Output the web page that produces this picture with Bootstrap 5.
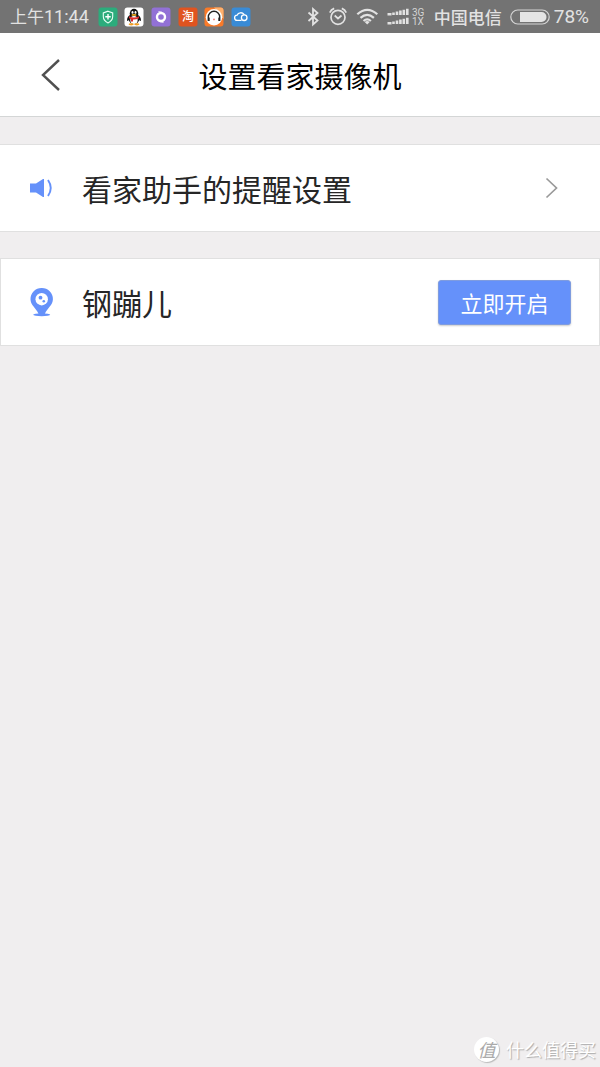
<!DOCTYPE html>
<html lang="zh-CN">
<head>
<meta charset="utf-8">
<meta name="viewport" content="width=device-width, initial-scale=1">
<title>设置看家摄像机</title>
<link href="https://cdn.jsdelivr.net/npm/bootstrap@5.3.0/dist/css/bootstrap.min.css" rel="stylesheet">
<style>
  body { background: #f0eeef; color: #262626; font-family: "Noto Sans CJK SC", sans-serif; }
  svg { display: block; flex: none; }
  .status-bar { height: 33px; background: #737373; color: #e2e2e2; font-family: Roboto, "Noto Sans CJK SC", sans-serif; font-size: 18px; line-height: 33px; padding: 0 11px 0 10px; }
  .status-cn { font-size: 17px; }
  .carrier { font-family: "Noto Sans CJK SC", sans-serif; font-size: 17px; }
  .battery-level { font-size: 19px; }
  .app-icons { width: 153px; margin-left: 9px; }
  .title-bar { height: 84px; background: #fff; border-bottom: 1px solid #d4d6d6; display: grid; grid-template-columns: 100px 1fr 100px; align-items: center; }
  .title-bar h1 { font-size: 29px; line-height: 40px; font-weight: 400; color: #000; }
  .back-btn { width: 100px; height: 83px; padding: 0 0 0 40px; }
  .settings { padding-top: 27px; gap: 26px; }
  .setting-row { min-height: 88px; background: #fff; border: 1px solid #e0e0e0; padding: 0 28px; color: #262626; font-size: 30px; line-height: 44px; text-decoration: none; }
  .setting-row.edge { border-width: 1px 0; padding: 0 41px 0 29px; }
  .row-icon { width: 53px; }
  .open-btn { --bs-btn-color: #fff; --bs-btn-bg: #6591fa; --bs-btn-hover-color: #fff; --bs-btn-hover-bg: #5583ee; width: 133px; height: 45px; padding: 0; border: 1px solid #7f9cdf; border-radius: 3px; font-size: 22px; line-height: 43px; box-shadow: 0 1px 2px #ccc; }
  .site-mark { gap: 7px; padding: 0 4px 4px 0; color: #fff; font-size: 18px; line-height: 28px; text-shadow: 1px 1px 1px #aaa; }
  .site-logo { width: 25px; height: 25px; line-height: 24px; font-size: 18px; border-radius: 50%; background: #fff; color: #aaa; text-align: center; text-shadow: none; font-style: italic; box-shadow: 1px 1px 1px #bbb; }
</style>
</head>
<body>
<div class="d-flex flex-column min-vh-100">
  <div class="status-bar d-flex align-items-center">
    <div class="text-nowrap"><span class="status-cn">上午</span>11:44</div>
    <div class="app-icons d-flex justify-content-between">
      <svg width="20" height="20" viewBox="0 0 20 20"><rect x=".5" y=".5" width="19" height="19" rx="3" fill="#2cac7c"/><path d="M10 4.2 14.7 6v3.6c0 3-2 5-4.7 6.300-2.700-1.300-4.700-3.300-4.700-6.300V6z" fill="none" stroke="#e9fff6" stroke-width="1.100"/><path d="M10 7v5.400M7.300 9.700h5.400" stroke="#fff" stroke-width="1.400"/></svg>
      <svg width="20" height="20" viewBox="0 0 20 20"><rect x=".5" y=".5" width="19" height="19" rx="3" fill="#fff"/><path d="M5.600 8C3.500 10 2.600 12.200 3.300 14c.6.300 1.200-.5 1.700-1.200M14.400 8c2.100 2 3 4.200 2.300 6-.6.300-1.200-.5-1.700-1.200" fill="#111"/><ellipse cx="10" cy="11.500" rx="5.300" ry="5.500" fill="#111"/><ellipse cx="10" cy="6.800" rx="4.300" ry="5.100" fill="#111"/><ellipse cx="10" cy="13" rx="3.700" ry="3.900" fill="#fff"/><ellipse cx="8.500" cy="5.400" rx="1" ry="1.400" fill="#fff"/><ellipse cx="11.500" cy="5.400" rx="1" ry="1.400" fill="#fff"/><ellipse cx="10" cy="7.900" rx="2.600" ry=".9" fill="#f5b120"/><path d="M5 9.300q5 2.600 10 0v1.900q-3 1.500-6 1.300v2H7v-2.500l-2-.8z" fill="#e02b2b"/><ellipse cx="7.200" cy="17.300" rx="2.600" ry="1.100" fill="#f5a020"/><ellipse cx="12.800" cy="17.300" rx="2.600" ry="1.100" fill="#f5a020"/></svg>
      <svg width="20" height="20" viewBox="0 0 20 20"><rect x=".5" y=".5" width="19" height="19" rx="3" fill="#9271d6"/><circle cx="10" cy="10" r="4" fill="none" stroke="#fff" stroke-width="2.400"/><path d="m7.500 4.700 3.500.6M9 14.700l3.500.6" stroke="#fff"/></svg>
      <svg width="20" height="20" viewBox="0 0 20 20"><rect x=".5" y=".5" width="19" height="19" rx="3" fill="#e05420"/><text x="10" y="14" font-size="12" font-weight="500" text-anchor="middle" fill="#fff">淘</text></svg>
      <svg width="20" height="20" viewBox="0 0 20 20"><rect x=".5" y=".5" width="19" height="19" rx="3" fill="#fa7a28"/><path d="M10 .5h6.500a3 3 0 0 1 3 3V12z" fill="#ffb06c"/><circle cx="10" cy="10.200" r="8.200" fill="#fff"/><path d="M4.300 14V10a5.700 5.700 0 0 1 11.400 0v4" fill="none" stroke="#222" stroke-width="1.400"/><path d="M5 10.500v3.500M15 10.500v3.500" stroke="#222" stroke-width="1.400"/><circle cx="10" cy="12.400" r=".9" fill="#ef7770"/></svg>
      <svg width="20" height="20" viewBox="0 0 20 20"><rect x=".5" y=".5" width="19" height="19" rx="3" fill="#398bd6"/><path d="M10 13.400H6.300a2.600 2.600 0 0 1-.2-5.200A4 4 0 0 1 13 7.400" fill="none" stroke="#fff" stroke-width="1.300" stroke-linecap="round"/><circle cx="13.200" cy="10.700" r="2.800" fill="none" stroke="#fff" stroke-width="1.300"/></svg>
    </div>
    <div class="d-flex align-items-center ms-auto">
      <svg width="123" height="24" viewBox="303 5 123 24" fill="none" stroke="#e2e2e2" role="img" aria-label="蓝牙 闹钟 无线网络 3G 1X">
        <path d="m308.500 12.500 9 8-4.500 4V9l4.500 4-9 8" stroke-width="1.800"/>
        <circle cx="338" cy="17.300" r="7" stroke-width="1.700"/><path d="m334.700 15.500 3.300 3 3.500-3M329.800 12.600q1.200-3 4.400-4.200M346.200 12.600q-1.200-3-4.400-4.200" stroke-width="1.700"/>
        <path d="M357.300 14.300q10-9 20 0M360.500 17.900q6.700-6 13.400 0M363.500 21q3.700-3.200 7.400 0" stroke-width="2.200"/><path d="m364.700 22 2.500 2.500 2.500-2.500q-2.500-1.800-5 0z" fill="#e2e2e2" stroke="none"/>
        <path d="M387.500 14.200h4M393.500 15v-2.500M397 15v-3.500M400.400 15v-4.500M403.800 15V9.700M407.300 15V8.800M387.500 23.200h4M393.500 24v-2.500M397 24v-3.500M400.400 24v-4.500M403.800 24v-5.300M407.300 24v-6.200" stroke-width="2.600"/>
        <g fill="#d4d4d4" stroke="none" font-size="10"><text x="412" y="15.500">3G</text><text x="412" y="24.500">1X</text></g>
      </svg>
      <span class="carrier text-nowrap fw-medium ms-2">中国电信</span>
      <svg class="ms-2" width="40" height="16" viewBox="0 0 40 16"><rect x=".8" y="1" width="38.400" height="14" rx="7" fill="none" stroke="#d5d5d5" stroke-width="1.200"/><path d="M10 3h21.500a5 5 0 0 1 0 10H10z" fill="#e4e4e4"/></svg>
      <span class="battery-level ms-1">78%</span>
    </div>
  </div>

  <header class="title-bar">
    <button type="button" class="back-btn btn border-0" aria-label="返回"><svg width="22" height="32" viewBox="0 0 22 32"><path d="M19 1 3 16 19 31" fill="none" stroke="#505050" stroke-width="2.400"/></svg></button>
    <h1 class="m-0 text-center text-nowrap">设置看家摄像机</h1>
  </header>

  <main class="settings flex-grow-1 d-flex flex-column">
    <a href="#reminders" class="setting-row edge d-flex align-items-center">
      <span class="row-icon"><svg width="25" height="20" viewBox="0 0 25 20"><path d="M1 5.500h6L14 1h1v18h-1l-7-4.500H1z" fill="#6591fa"/><path d="M19 2q5.500 8 0 16" fill="none" stroke="#6591fa" stroke-width="1.900"/></svg></span>
      <span>看家助手的提醒设置</span>
      <svg class="ms-auto" width="14" height="22" viewBox="0 0 14 22"><path d="m1.500 1.500 10 9.500-10 9.500" fill="none" stroke="#999" stroke-width="1.700"/></svg>
    </a>
    <section class="setting-row d-flex align-items-center">
      <span class="row-icon"><svg width="26" height="30" viewBox="0 0 26 30"><ellipse cx="12.700" cy="27.700" rx="8.500" ry="1.500" fill="#6591fa"/><path d="M12.700 1A11 11 0 0 0 1.500 12.200c0 6 5.600 8.500 8.100 14.800h6.200c2.500-6.300 8.100-8.800 8.100-14.800A11 11 0 0 0 12.700 1z" fill="#6591fa"/><circle cx="12.700" cy="12.200" r="6.200" fill="#fff"/><circle cx="11.500" cy="10.700" r="1.900" fill="#6591fa"/><circle cx="14.800" cy="14.300" r="1.300" fill="#6591fa"/></svg></span>
      <span>钢蹦儿</span>
      <button type="button" class="btn open-btn ms-auto">立即开启</button>
    </section>
  </main>

  <footer class="site-mark d-flex align-items-center justify-content-end">
    <span class="site-logo">值</span><span>什么值得买</span>
  </footer>
</div>
<script src="https://cdn.jsdelivr.net/npm/bootstrap@5.3.0/dist/js/bootstrap.bundle.min.js"></script>
</body>
</html>
